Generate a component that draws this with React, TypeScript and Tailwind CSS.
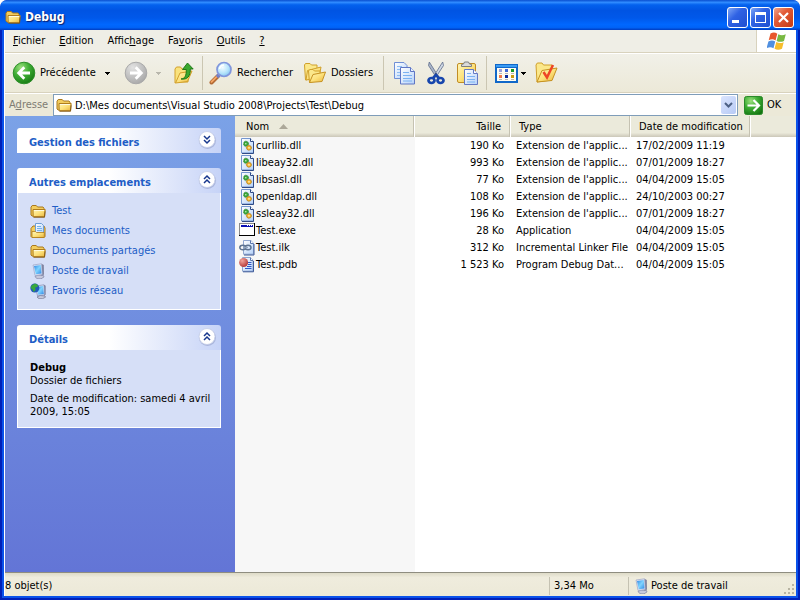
import { useState } from 'react';
import type { ReactNode } from 'react';

interface FileEntry {
  name: string;
  size: string;
  type: string;
  date: string;
  icon: () => ReactNode;
}

// Gradients shared by all the icons
function IconGradients() {
  return (
    <svg width="0" height="0" className="absolute" aria-hidden="true">
      <defs>
        <linearGradient id="folder" x1="0" y1="0" x2="1" y2="1">
          <stop offset="0" stopColor="#fff6b8" />
          <stop offset="0.5" stopColor="#fde27c" />
          <stop offset="1" stopColor="#e8b33c" />
        </linearGradient>
        <radialGradient id="green" cx="0.35" cy="0.25" r="0.85">
          <stop offset="0" stopColor="#9be07d" />
          <stop offset="0.45" stopColor="#3fae35" />
          <stop offset="1" stopColor="#12740f" />
        </radialGradient>
        <radialGradient id="gray" cx="0.35" cy="0.25" r="0.85">
          <stop offset="0" stopColor="#e2e2e2" />
          <stop offset="1" stopColor="#a4a4a4" />
        </radialGradient>
        <radialGradient id="lens" cx="0.4" cy="0.35" r="0.7">
          <stop offset="0" stopColor="#f4fcff" />
          <stop offset="0.6" stopColor="#b5e4fb" />
          <stop offset="1" stopColor="#7cc0f0" />
        </radialGradient>
        <linearGradient id="page" x1="0" y1="0" x2="1" y2="1">
          <stop offset="0" stopColor="#ffffff" />
          <stop offset="1" stopColor="#b5d2fa" />
        </linearGradient>
        <linearGradient id="screen" x1="0" y1="0" x2="1" y2="1">
          <stop offset="0" stopColor="#2f86e4" />
          <stop offset="0.5" stopColor="#7fd4ff" />
          <stop offset="1" stopColor="#2f86e4" />
        </linearGradient>
        <radialGradient id="ball" cx="0.35" cy="0.3" r="0.8">
          <stop offset="0" stopColor="#f3a49c" />
          <stop offset="1" stopColor="#b02f2f" />
        </radialGradient>
      </defs>
    </svg>
  );
}

function FolderIcon() {
  return (
    <svg width="16" height="16" viewBox="0 0 16 16" className="shrink-0">
      <path d="M1 4.2 2.2 2.5h4L7.6 4H13l1 1.3V13H2.2L1 12z" fill="#f3cd5e" stroke="#a9781c" />
      <path d="M3 6.5h12.2l-.7 7.2H3.2z" fill="url(#folder)" stroke="#b07d1d" />
      <path d="M4 7.5h10" stroke="#fffbe0" />
      <path d="M3.5 14.3h11l.6-6" stroke="#7d520c" strokeWidth=".8" fill="none" />
    </svg>
  );
}

function DocumentsIcon() {
  return (
    <svg width="16" height="16" viewBox="0 0 16 16" className="shrink-0">
      <path d="M1 5.5 3 3h11l1 2v8.5l-1 1H2l-1-1z" fill="#f3cd5e" stroke="#a9781c" />
      <path d="M5.5.5h6l2 2V11h-8z" fill="url(#page)" stroke="#6d9fd8" />
      <path d="M7 3.5h4M7 5.5h5M7 7.5h5" stroke="#74b3ec" />
      <path d="M2 8.5h3.5l1 1h7.8v5H2z" fill="url(#folder)" stroke="#b07d1d" strokeWidth=".8" />
    </svg>
  );
}

function ComputerIcon() {
  return (
    <svg width="16" height="16" viewBox="0 0 16 16" className="shrink-0">
      <path d="M5 13.5 8 12l5.500.5.5 1.500-3 1.800H7z" fill="#c6c9dc" stroke="#7d81a3" strokeWidth=".7" />
      <path d="m11.500.8 2.300 1.200.2 9.500-2.500 1.500z" fill="#80849f" />
      <path d="M3 2 11.500.8l.8 10.700L5 12.500z" fill="#dfe6f6" stroke="#8f99c0" strokeWidth=".6" />
      <path d="m4 2.900 6.800-1 .7 8.600-5.800.8z" fill="url(#screen)" />
    </svg>
  );
}

function NetworkIcon() {
  return (
    <svg width="16" height="16" viewBox="0 0 16 16" className="shrink-0">
      <path d="m7 14 3-1.500 5 .5.500 1.200-3 1.500H9z" fill="#c6c9dc" stroke="#70748f" strokeWidth=".7" />
      <path d="m14 1.800 1.700 1v8.700L14 13z" fill="#80849f" />
      <path d="m5.500 3 8.500-1.200.7 10-7.200 1z" fill="#dfe6f6" stroke="#6f7aa8" strokeWidth=".6" />
      <path d="m6.500 3.900 6.700-1 .6 8-5.600.8z" fill="url(#screen)" />
      <circle cx="4.800" cy="5" r="4.500" fill="#2459b8" />
      <path d="M1.500 2.500 5 .6l3 1.500-.6 2-2.200.5.4 2.600-2 1.800-1-2.600L.8 5z" fill="#38a83c" />
    </svg>
  );
}

function DllIcon() {
  return (
    <svg width="16" height="16" viewBox="0 0 16 16" className="shrink-0">
      <path d="M2.5.5h9L14.500 3.500v11.500h-12z" fill="url(#page)" stroke="#7396cf" />
      <path d="M14.500 3.500v12H3" fill="none" stroke="#2f4a86" />
      <path d="M11.500.5v3h3" fill="#fff" stroke="#2f4a86" />
      <path d="m5 4 1.500-.8L8 3.500l1.500 1.300-.2 2L7.800 8 6 8.300 4.600 7z" fill="#3aa83a" stroke="#237f28" strokeWidth=".6" />
      <circle cx="6.800" cy="5.800" r=".8" fill="#c9efc0" />
      <path d="m8.300 7.800 1.900-.6 1.800 1 .6 1.800-.9 1.700-2 .6-1.700-.9-.7-1.800z" fill="#f0b12c" stroke="#a9740f" strokeWidth=".6" />
      <circle cx="10" cy="9.800" r=".9" fill="#fff2b8" />
    </svg>
  );
}

function ExeIcon() {
  return (
    <svg width="16" height="16" viewBox="0 1 16 16" className="shrink-0" shapeRendering="crispEdges">
      <path d="M0 1h16v13H0z" fill="#000" />
      <path d="M0 1h15v12H0z" fill="#8a8a8a" />
      <path d="M1 2h14v11H1z" fill="#fff" />
      <path d="M2 3h12v2H2z" fill="#0a10b4" />
      <path d="M8 3h1v1H8zM10 3h1v1h-1zM12 3h1v1h-1z" fill="#fff" />
    </svg>
  );
}

function IlkIcon() {
  return (
    <svg width="16" height="16" viewBox="0 0 16 16" className="shrink-0">
      <path d="M4.500.5h7.300l2.700 2.700v11h-10z" fill="url(#page)" stroke="#8fa6cf" />
      <path d="M15 4v11H5" fill="none" stroke="#3e5a99" />
      <path d="M11.500.5v3h3" fill="#fff" stroke="#5b76ad" />
      <ellipse cx="3.800" cy="7.500" rx="3" ry="2.300" fill="none" stroke="#5d7391" strokeWidth="1.500" />
      <ellipse cx="9" cy="7.500" rx="3" ry="2.300" fill="none" stroke="#5d7391" strokeWidth="1.500" />
      <path d="M4 7.500h5" stroke="#91a5bf" strokeWidth="1.300" />
    </svg>
  );
}

function PdbIcon() {
  return (
    <svg width="16" height="16" viewBox="0 0 16 16" className="shrink-0">
      <path d="M3.500.5h7.800l2.700 2.700v11H3.500z" fill="url(#page)" stroke="#8fa6cf" />
      <path d="M14.500 4v10.800H4" fill="none" stroke="#3e5a99" />
      <path d="M11.500.5v3H14" fill="#fff" stroke="#5b76ad" />
      <path d="M8 5.500h4.500M9 7.500h3.500M8 9.500h4.500M6 11.500h6.500" stroke="#2f55c4" />
      <circle cx="4.600" cy="5.500" r="4.500" fill="url(#ball)" />
    </svg>
  );
}

function BackIcon() {
  return (
    <svg width="24" height="24" viewBox="0 0 24 24">
      <circle cx="12" cy="12" r="10.8" fill="url(#green)" stroke="#2f8f2b" />
      <path d="m12.3 6.3-5.6 5.7 5.6 5.7M7.5 12H18" fill="none" stroke="#fff" strokeWidth="2.8" />
    </svg>
  );
}

function ForwardIcon() {
  return (
    <svg width="24" height="24" viewBox="0 0 24 24">
      <circle cx="12" cy="12" r="10.8" fill="url(#gray)" stroke="#a9a9a9" />
      <path d="m11.7 6.3 5.6 5.7-5.6 5.7M16.5 12H6" fill="none" stroke="#fff" strokeWidth="2.8" />
    </svg>
  );
}

function UpIcon() {
  return (
    <svg width="24" height="24" viewBox="0 0 24 24">
      <path d="m3 8 1.500-2h4L10 8h6v13H5l-2 1z" fill="#f9e27d" stroke="#d3a12c" />
      <path d="M3.500 22 8 12l12-2-4.500 10.500z" fill="url(#folder)" stroke="#d3a12c" />
      <path d="M9 18c4-.5 5.300-3 5.300-9.500H10.500L15.500 2l5.700 6H18.300c.2 7-2.800 11-9.300 10z" fill="#3aa82f" stroke="#18720f" strokeWidth=".9" />
    </svg>
  );
}

function SearchIcon() {
  return (
    <svg width="24" height="24" viewBox="0 0 24 24">
      <path d="m9 15-6.500 6.500" stroke="#b26a35" strokeWidth="4" strokeLinecap="round" />
      <path d="M8.500 14.800 2.500 20.800" stroke="#f6a766" strokeWidth="1.800" strokeLinecap="round" />
      <path d="m10.500 13.500-2.500 2.500" stroke="#7480c8" strokeWidth="3.500" />
      <circle cx="15" cy="8.500" r="7" fill="url(#lens)" stroke="#8196dc" strokeWidth="1.700" />
      <path d="M10.500 8a5 5 0 0 1 4.500-4" stroke="#fff" strokeWidth="1.500" fill="none" />
    </svg>
  );
}

function FoldersIcon() {
  return (
    <svg width="24" height="24" viewBox="0 0 24 24">
      <path d="m1.500 4 1-1.500H7L8.500 4H14v12l-11.500 3z" fill="#fbe88b" stroke="#d0a02b" />
      <path d="m3 19 1.500-9.500L18 6l-2 11z" fill="url(#folder)" stroke="#d0a02b" />
      <path d="m5.500 10 1.300-1.500H10L11.500 10H17v9l-10.500 2.500z" fill="#fbe88b" stroke="#d0a02b" />
      <path d="m6.500 21.500 3.500-8L22.500 11 19 20.500z" fill="url(#folder)" stroke="#c69221" />
    </svg>
  );
}

function CopyIcon() {
  return (
    <svg width="24" height="24" viewBox="0 0 24 24">
      <path d="M2.500 1.500h9.500l3 3v13H2.500z" fill="url(#page)" stroke="#6f8fd6" />
      <path d="M5 5.500h5M5 8.500h5M5 11.500h5M5 14.500h5" stroke="#8bbcf2" />
      <path d="M8.500 6.500h10l4 4v12.500h-14z" fill="url(#page)" stroke="#5f76c4" />
      <path d="M18.500 6.500v4h4" fill="#e9f2ff" stroke="#5f76c4" />
      <path d="M11 11.500h6M11 14.500h9M11 17.500h9M11 20h9" stroke="#7bb2f2" />
    </svg>
  );
}

function CutIcon() {
  return (
    <svg width="24" height="24" viewBox="0 0 24 24">
      <path d="M5.300 1 14.500 15.500l-2.500.5L4.500 4.500z" fill="#a9b4c8" stroke="#5d6c8c" strokeWidth=".8" />
      <path d="M18.700 1 9.500 15.500l2.500.5L19.500 4.500z" fill="#d0d8e4" stroke="#5d6c8c" strokeWidth=".8" />
      <circle cx="12" cy="13" r="1" fill="#33415f" />
      <path d="m9 17 2.500-2.500L12 14l.5.5L15 17" fill="none" stroke="#1746ad" strokeWidth="2.500" />
      <ellipse cx="7.500" cy="19.500" rx="3" ry="2.500" fill="none" stroke="#1746ad" strokeWidth="2.700" />
      <ellipse cx="16.500" cy="19.500" rx="3" ry="2.500" fill="none" stroke="#1746ad" strokeWidth="2.700" />
    </svg>
  );
}

function PasteIcon() {
  return (
    <svg width="24" height="24" viewBox="0 0 24 24">
      <rect x="1.500" y="2.500" width="18" height="19" rx="1.500" fill="url(#folder)" stroke="#c18d25" />
      <path d="M5.500 5.500V3.500l2-.5 1-2h4l1 2 2 .5v2z" fill="#dadada" stroke="#7e7e7e" />
      <path d="M8.500 8.500h9l4 4V23.500H8.500z" fill="url(#page)" stroke="#6478c2" />
      <path d="M17.500 8.500v4h4" fill="#fff" stroke="#6478c2" />
      <path d="M11 12.500h4M11 15.500h8M11 18.500h8M11 21h8" stroke="#7bb2f2" />
    </svg>
  );
}

function ViewsIcon() {
  return (
    <svg width="24" height="24" viewBox="0 0 24 24" shapeRendering="crispEdges">
      <rect x="0" y="3" width="23" height="19" fill="#1168c9" />
      <rect x="1" y="4" width="21" height="2" fill="#3b9cf4" />
      <rect x="2" y="7" width="19" height="13" fill="#fffdf2" />
      <path d="M4 8h3v3H4z" fill="#9aa0d8" />
      <path d="M10 8h3v3h-3z" fill="#3d68d8" />
      <path d="M16 8h3v3h-3z" fill="#159a25" />
      <path d="M4 14h3v3H4z" fill="#f07748" />
      <path d="M10 14h3v3h-3z" fill="#0a2a9c" />
      <path d="M16 14h3v3h-3z" fill="#c79a12" />
      <path d="M4 12h3M10 12h3M16 12h3M4 18h3M10 18h3M16 18h3" stroke="#b6b6b6" />
    </svg>
  );
}

function FolderCheckIcon() {
  return (
    <svg width="24" height="24" viewBox="0 0 24 24">
      <path d="m2 4 1.300-2H8l1.500 2H18v15L3 21z" fill="#fbe88b" stroke="#d0a02b" />
      <path d="M3 21 8 9.500 23 7l-5 12.500z" fill="url(#folder)" stroke="#c69221" />
      <path d="m9.500 11 3.500 5.500L19 4" fill="none" stroke="#ee4526" strokeWidth="2.500" />
    </svg>
  );
}

function WindowsLogo() {
  return (
    <svg width="20" height="20" viewBox="0 0 20 20">
      <path d="M3.500 2.600C6 1.200 8 1.300 10.300 2.700L8.500 9.400C6.400 8 4.200 8 1.700 9.300z" fill="#e8572c" />
      <path d="M11.300 3.200c2.400 1.300 4.600 1.300 7.500.1L17 10c-2.700 1.200-5 1.100-7.400-.1z" fill="#79b943" />
      <path d="M1.400 10.400c2.500-1.200 4.700-1.200 6.800.1l-1.700 6.700c-2.200-1.300-4.400-1.300-7 0z" fill="#4f8fe0" />
      <path d="M9.300 11.100c2.400 1.300 4.700 1.300 7.400.1L15 17.800c-2.900 1.200-5.100 1.100-7.500-.1z" fill="#f6bd2c" />
    </svg>
  );
}

function Caret({ disabled = false }: { disabled?: boolean }) {
  return (
    <svg width="5" height="3" viewBox="0 0 5 3" shapeRendering="crispEdges">
      <path d="M0 0h5v1H4v1H3v1H2V2H1V1H0z" fill={disabled ? '#b9b7ac' : '#000'} />
    </svg>
  );
}

const menus = [
  { before: '', key: 'F', after: 'ichier' },
  { before: '', key: 'E', after: 'dition' },
  { before: 'Affic', key: 'h', after: 'age' },
  { before: 'Fa', key: 'v', after: 'oris' },
  { before: '', key: 'O', after: 'utils' },
  { before: '', key: '?', after: '' },
];

const places = [
  { label: 'Test', icon: FolderIcon },
  { label: 'Mes documents', icon: DocumentsIcon },
  { label: 'Documents partagés', icon: FolderIcon },
  { label: 'Poste de travail', icon: ComputerIcon },
  { label: 'Favoris réseau', icon: NetworkIcon },
];

const files: FileEntry[] = [
  { name: 'curllib.dll', size: '190 Ko', type: "Extension de l'applic...", date: '17/02/2009 11:19', icon: DllIcon },
  { name: 'libeay32.dll', size: '993 Ko', type: "Extension de l'applic...", date: '07/01/2009 18:27', icon: DllIcon },
  { name: 'libsasl.dll', size: '77 Ko', type: "Extension de l'applic...", date: '04/04/2009 15:05', icon: DllIcon },
  { name: 'openldap.dll', size: '108 Ko', type: "Extension de l'applic...", date: '24/10/2003 00:27', icon: DllIcon },
  { name: 'ssleay32.dll', size: '196 Ko', type: "Extension de l'applic...", date: '07/01/2009 18:27', icon: DllIcon },
  { name: 'Test.exe', size: '28 Ko', type: 'Application', date: '04/04/2009 15:05', icon: ExeIcon },
  { name: 'Test.ilk', size: '312 Ko', type: 'Incremental Linker File', date: '04/04/2009 15:05', icon: IlkIcon },
  { name: 'Test.pdb', size: '1 523 Ko', type: 'Program Debug Dat...', date: '04/04/2009 15:05', icon: PdbIcon },
];

function TitleBar() {
  const button = 'flex size-[21px] items-center justify-center rounded-[3px] border border-white';
  const blue = 'bg-[linear-gradient(135deg,#7ea6f6,#2f62e4_40%,#1f4fd0)]';

  return (
    <header className="flex h-[30px] shrink-0 items-center gap-1 rounded-t-[7px] bg-[linear-gradient(#0a4fd0,#2f8bff_8%,#0462ee_16%,#0054e3_35%,#0058ea_60%,#0068ff_82%,#0062f6_92%,#003cc0)] pt-1 pr-1.5 pl-[5px]">
      <FolderIcon />
      <h1 className="flex-1 text-[12px] font-bold text-white [text-shadow:1px_1px_1px_#0a1f6e]">Debug</h1>
      <div className="flex gap-[2px]">
        <button className={`${button} ${blue}`} aria-label="Réduire">
          <svg width="15" height="15" shapeRendering="crispEdges">
            <path d="M2 10h7v3H2z" fill="#fff" />
          </svg>
        </button>
        <button className={`${button} ${blue}`} aria-label="Agrandir">
          <svg width="15" height="15" shapeRendering="crispEdges">
            <path d="M2 2h11v11H2zM3 5v7h9V5z" fill="#fff" fillRule="evenodd" />
          </svg>
        </button>
        <button
          className={`${button} bg-[linear-gradient(135deg,#f0a48c,#e25a37_40%,#c63a12)]`}
          aria-label="Fermer"
        >
          <svg width="15" height="15">
            <path d="m3 3 9 9M12 3l-9 9" stroke="#fff" strokeWidth="2.200" />
          </svg>
        </button>
      </div>
    </header>
  );
}

function MenuBar() {
  return (
    <nav className="flex h-[23px] shrink-0 border-b border-[#d8d2bd] bg-[#efeee6]">
      <div className="flex flex-1 items-center pl-px">
        {menus.map((menu) => (
          <button key={menu.key} className="px-[7px]">
            {menu.before}
            <u className="underline-offset-1">{menu.key}</u>
            {menu.after}
          </button>
        ))}
      </div>
      <div className="flex w-10 items-center justify-center border-l border-[#d8d2bd] bg-white">
        <WindowsLogo />
      </div>
    </nav>
  );
}

function ToolSeparator() {
  return <div className="h-[34px] w-px bg-[#cbc6b2]" />;
}

function ToolBar() {
  return (
    <div className="flex h-10 shrink-0 items-center border-t border-b border-t-white border-b-[#d8d2bd] bg-[linear-gradient(#f1f0e8,#ece9d8)] pl-[7px]">
      <button className="flex w-[85px] items-center gap-1">
        <BackIcon />
        Précédente
      </button>
      <button className="flex w-[27px] justify-start pl-2" aria-label="Pages précédentes">
        <Caret />
      </button>
      <button aria-label="Suivante" disabled>
        <ForwardIcon />
      </button>
      <button className="flex w-6 justify-start pl-2" aria-label="Pages suivantes" disabled>
        <Caret disabled />
      </button>
      <button className="mr-1.5" aria-label="Dossier parent">
        <UpIcon />
      </button>
      <ToolSeparator />
      <button className="ml-1.5 flex w-[94px] items-center gap-1">
        <SearchIcon />
        Rechercher
      </button>
      <button className="flex w-[80px] items-center gap-1">
        <FoldersIcon />
        Dossiers
      </button>
      <ToolSeparator />
      <button className="ml-2" aria-label="Copier">
        <CopyIcon />
      </button>
      <button className="ml-2" aria-label="Couper">
        <CutIcon />
      </button>
      <button className="mr-1.5 ml-2" aria-label="Coller">
        <PasteIcon />
      </button>
      <ToolSeparator />
      <button className="ml-2 flex items-center gap-0.5" aria-label="Affichages">
        <ViewsIcon />
        <Caret />
      </button>
      <button className="ml-2" aria-label="Options des dossiers">
        <FolderCheckIcon />
      </button>
    </div>
  );
}

function AddressBar() {
  const [path, setPath] = useState('D:\\Mes documents\\Visual Studio 2008\\Projects\\Test\\Debug');

  return (
    <form className="flex h-[23px] shrink-0 items-center border-t border-white bg-[#ece9d8]" onSubmit={(e) => e.preventDefault()}>
      <label htmlFor="address" className="w-12 pl-1 text-[#7f7c73]">
        A<u className="underline-offset-1">d</u>resse
      </label>
      <div className="flex h-[22px] flex-1 items-center gap-[3px] border border-[#7f9db9] bg-white pr-px pl-0.5">
        <FolderIcon />
        <input
          id="address"
          value={path}
          onChange={(e) => setPath(e.target.value)}
          className="min-w-0 flex-1 pt-px outline-none"
        />
        <button
          type="button"
          className="flex h-[18px] w-[15px] items-center justify-center rounded-xs bg-[linear-gradient(135deg,#dbe5fe,#b7caf5)]"
          aria-label="Historique des adresses"
        >
          <svg width="9" height="6" viewBox="0 0 9 6">
            <path d="m1 1 3.500 3.500L8 1" fill="none" stroke="#4d6185" strokeWidth="2" />
          </svg>
        </button>
      </div>
      <button className="ml-1.5 flex w-[52px] items-center gap-1">
        <svg width="19" height="19" viewBox="0 0 19 19">
          <rect x=".5" y=".5" width="18" height="18" rx="2" fill="url(#green)" stroke="#2b8a2b" />
          <path d="m9.500 4 5.500 5.500L9.500 15M14 9.500H3.500" fill="none" stroke="#fff" strokeWidth="2.200" />
        </svg>
        OK
      </button>
    </form>
  );
}

interface TaskPanelProps {
  title: string;
  defaultOpen?: boolean;
  children?: ReactNode;
}

function TaskPanel({ title, defaultOpen = true, children }: TaskPanelProps) {
  const [open, setOpen] = useState(defaultOpen);

  return (
    <section>
      <button
        onClick={() => setOpen(!open)}
        aria-expanded={open}
        className="flex h-[25px] w-full items-center justify-between rounded-t-[3px] bg-[linear-gradient(to_right,#fff_45%,#c6d3f7)] pr-1 pl-3 text-[#215dc6]"
      >
        <span className="pt-1 font-bold">{title}</span>
        <svg width="20" height="20" viewBox="0 0 20 20">
          <circle cx="10.500" cy="9.500" r="8.500" fill="#a9b5dc" />
          <circle cx="10" cy="8.500" r="8" fill="#fff" stroke="#c3cbe6" strokeWidth=".8" />
          <path
            d={open ? 'M7 8l3-3 3 3M7 12l3-3 3 3' : 'M7 5l3 3 3-3M7 9l3 3 3-3'}
            fill="none"
            stroke="#16368c"
            strokeWidth="1.500"
          />
        </svg>
      </button>
      {open && children && (
        <div className="border border-t-0 border-white bg-[#d6dff7] pr-1 pl-3">{children}</div>
      )}
    </section>
  );
}

function Sidebar() {
  return (
    <aside className="flex w-[230px] shrink-0 flex-col gap-[15px] bg-[linear-gradient(#7ba2e7,#6375d6)] pt-3 pr-3.5 pl-3">
      <TaskPanel title="Gestion des fichiers" defaultOpen={false} />
      <TaskPanel title="Autres emplacements">
        <ul className="py-2">
          {places.map(({ label, icon: Icon }) => (
            <li key={label}>
              <a href="#" className="flex h-5 items-center gap-1.5 text-[#215dc6]">
                <Icon />
                {label}
              </a>
            </li>
          ))}
        </ul>
      </TaskPanel>
      <TaskPanel title="Détails">
        <div className="pt-[11px] pb-[9px] leading-[13px]">
          <p className="font-bold">Debug</p>
          <p>Dossier de fichiers</p>
          <p className="mt-[5px]">Date de modification: samedi 4 avril 2009, 15:05</p>
        </div>
      </TaskPanel>
    </aside>
  );
}

function FileList() {
  const th = 'border-r border-[#c5c2b2] pr-2 font-normal shadow-[1px_0_0_#fff]';

  return (
    <main className="min-w-0 flex-1 overflow-hidden bg-[linear-gradient(to_right,#f7f7f7_180px,#fff_180px)]">
      <table className="w-full table-fixed border-separate border-spacing-0">
        <colgroup>
          <col className="w-[179px]" />
          <col className="w-24" />
          <col className="w-[120px]" />
          <col className="w-[120px]" />
          <col />
        </colgroup>
        <thead>
          <tr className="h-[21px] bg-[linear-gradient(#ebeadb_80%,#cbc7b8)] text-left">
            <th className={`${th} pl-[11px]`}>
              <span className="flex items-center gap-2.5">
                Nom
                <svg width="9" height="5" viewBox="0 0 9 5">
                  <path d="M0 5 4.500 0 9 5z" fill="#aca899" />
                </svg>
              </span>
            </th>
            <th className={`${th} text-right`}>Taille</th>
            <th className={`${th} pl-[9px]`}>Type</th>
            <th className={`${th} pl-[9px] whitespace-nowrap`}>Date de modification</th>
            <td />
          </tr>
        </thead>
        <tbody>
          {files.map(({ icon: Icon, ...file }) => (
            <tr key={file.name} className="h-[17px] leading-[17px] whitespace-nowrap">
              <td className="pl-1">
                <span className="flex items-center gap-px">
                  <Icon />
                  {file.name}
                </span>
              </td>
              <td className="pr-1.5 text-right">{file.size}</td>
              <td className="pl-1.5">{file.type}</td>
              <td className="pl-1.5">{file.date}</td>
              <td />
            </tr>
          ))}
        </tbody>
      </table>
    </main>
  );
}

function StatusBar() {
  return (
    <footer className="flex h-6 shrink-0 items-center border-t border-[#8f8d80] bg-[linear-gradient(#dedbc8,#efecdd_20%,#ece9d8)] pt-0.5">
      <p className="flex-1">8 objet(s)</p>
      <p className="w-[79px] border-l border-[#c5c2b2] pl-1 leading-[18px]">3,34 Mo</p>
      <p className="flex w-[155px] items-center gap-0.5 border-l border-[#c5c2b2] pl-1 leading-[18px]">
        <ComputerIcon />
        Poste de travail
      </p>
      <svg width="13" height="13" viewBox="0 0 13 13" className="self-end" shapeRendering="crispEdges">
        <path d="M9 1h2v2H9zM5 5h2v2H5zM9 5h2v2H9zM1 9h2v2H1zM5 9h2v2H5zM9 9h2v2H9z" fill="#b8b4a2" />
      </svg>
    </footer>
  );
}

export default function App() {
  return (
    <div className="flex h-screen flex-col overflow-hidden rounded-t-[7px] bg-[#0846dc] font-['DejaVu_Sans_Condensed','DejaVu_Sans',sans-serif] text-[11px] leading-[14px] text-black">
      <IconGradients />
      <TitleBar />
      <div className="flex min-h-0 flex-1 flex-col border-r-2 border-b-2 border-l-2 border-[#0020b8]">
        <div className="flex min-h-0 flex-1 flex-col border-r-2 border-b-2 border-l-2 border-[#0a52ea]">
          <div className="flex min-h-0 flex-1 flex-col border-l border-white">
            <MenuBar />
            <ToolBar />
            <AddressBar />
            <div className="flex min-h-0 flex-1">
              <Sidebar />
              <FileList />
            </div>
            <StatusBar />
          </div>
        </div>
      </div>
    </div>
  );
}
